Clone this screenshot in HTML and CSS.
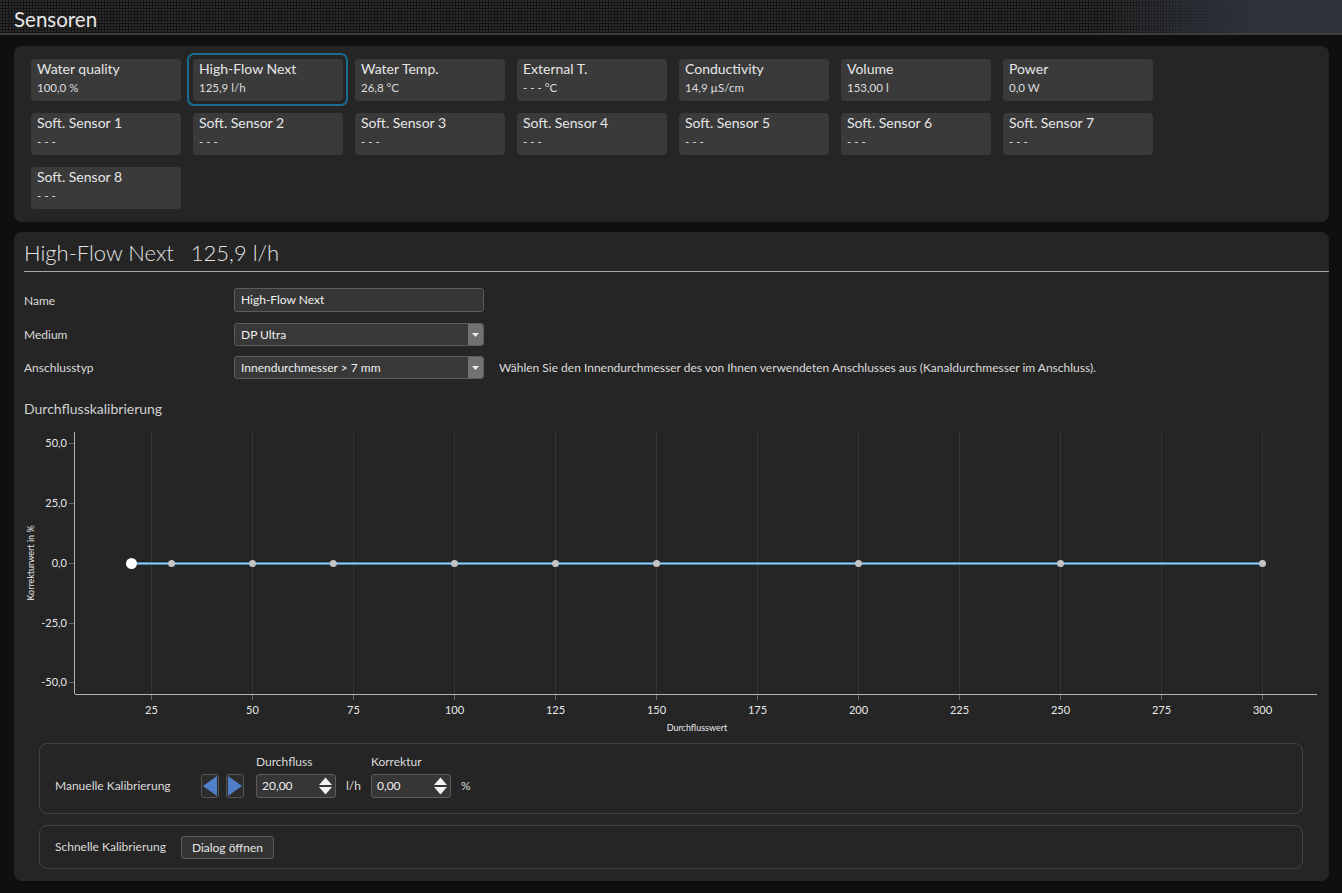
FILE: index.html
```html
<!DOCTYPE html>
<html lang="de">
<head>
<meta charset="utf-8">
<title>Sensoren</title>
<link rel="stylesheet" href="styles.css">
</head>
<body>
<header class="topbar"><h1 class="topbar-title">Sensoren</h1></header>
<main class="content">
  <section class="panel sensors">
    <div class="tile"><div class="tile-name">Water quality</div><div class="tile-value">100,0 %</div></div>
    <div class="tile selected"><div class="tile-name">High-Flow Next</div><div class="tile-value">125,9 l/h</div></div>
    <div class="tile"><div class="tile-name">Water Temp.</div><div class="tile-value">26,8 °C</div></div>
    <div class="tile"><div class="tile-name">External T.</div><div class="tile-value">- - - °C</div></div>
    <div class="tile"><div class="tile-name">Conductivity</div><div class="tile-value">14,9 µS/cm</div></div>
    <div class="tile"><div class="tile-name">Volume</div><div class="tile-value">153,00 l</div></div>
    <div class="tile"><div class="tile-name">Power</div><div class="tile-value">0,0 W</div></div>
    <div class="tile"><div class="tile-name">Soft. Sensor 1</div><div class="tile-value">- - -</div></div>
    <div class="tile"><div class="tile-name">Soft. Sensor 2</div><div class="tile-value">- - -</div></div>
    <div class="tile"><div class="tile-name">Soft. Sensor 3</div><div class="tile-value">- - -</div></div>
    <div class="tile"><div class="tile-name">Soft. Sensor 4</div><div class="tile-value">- - -</div></div>
    <div class="tile"><div class="tile-name">Soft. Sensor 5</div><div class="tile-value">- - -</div></div>
    <div class="tile"><div class="tile-name">Soft. Sensor 6</div><div class="tile-value">- - -</div></div>
    <div class="tile"><div class="tile-name">Soft. Sensor 7</div><div class="tile-value">- - -</div></div>
    <div class="tile"><div class="tile-name">Soft. Sensor 8</div><div class="tile-value">- - -</div></div>
  </section>

  <section class="panel detail">
    <h2 class="detail-title"><span>High-Flow Next</span><span>125,9 l/h</span></h2>
    <div class="form">
      <div class="form-row">
        <label class="form-label">Name</label>
        <div class="field">High-Flow Next</div>
      </div>
      <div class="form-row row-medium">
        <label class="form-label">Medium</label>
        <div class="field select">DP Ultra<span class="select-btn"><svg width="7" height="4" viewBox="0 0 7 4"><path d="M0 0H7L3.5 4Z" fill="#eee"/></svg></span></div>
      </div>
      <div class="form-row row-conn">
        <label class="form-label">Anschlusstyp</label>
        <div class="field select">Innendurchmesser &gt; 7 mm<span class="select-btn"><svg width="7" height="4" viewBox="0 0 7 4"><path d="M0 0H7L3.5 4Z" fill="#eee"/></svg></span></div>
        <span class="help">Wählen Sie den Innendurchmesser des von Ihnen verwendeten Anschlusses aus (Kanaldurchmesser im Anschluss).</span>
      </div>
    </div>

    <h3 class="section-title">Durchflusskalibrierung</h3>

    <svg class="chart" width="1305" height="315" viewBox="0 0 1305 315">
      <g stroke="#343434" stroke-width="1">
        <line x1="127.5" y1="7" x2="127.5" y2="269"/>
        <line x1="228.5" y1="7" x2="228.5" y2="269"/>
        <line x1="329.5" y1="7" x2="329.5" y2="269"/>
        <line x1="430.5" y1="7" x2="430.5" y2="269"/>
        <line x1="531.5" y1="7" x2="531.5" y2="269"/>
        <line x1="632.5" y1="7" x2="632.5" y2="269"/>
        <line x1="733.5" y1="7" x2="733.5" y2="269"/>
        <line x1="834.5" y1="7" x2="834.5" y2="269"/>
        <line x1="935.5" y1="7" x2="935.5" y2="269"/>
        <line x1="1036.5" y1="7" x2="1036.5" y2="269"/>
        <line x1="1137.5" y1="7" x2="1137.5" y2="269"/>
        <line x1="1238.5" y1="7" x2="1238.5" y2="269"/>
      </g>
      <g stroke="#6a6a6a" stroke-width="1">
        <line x1="127.5" y1="269" x2="127.5" y2="275"/>
        <line x1="228.5" y1="269" x2="228.5" y2="275"/>
        <line x1="329.5" y1="269" x2="329.5" y2="275"/>
        <line x1="430.5" y1="269" x2="430.5" y2="275"/>
        <line x1="531.5" y1="269" x2="531.5" y2="275"/>
        <line x1="632.5" y1="269" x2="632.5" y2="275"/>
        <line x1="733.5" y1="269" x2="733.5" y2="275"/>
        <line x1="834.5" y1="269" x2="834.5" y2="275"/>
        <line x1="935.5" y1="269" x2="935.5" y2="275"/>
        <line x1="1036.5" y1="269" x2="1036.5" y2="275"/>
        <line x1="1137.5" y1="269" x2="1137.5" y2="275"/>
        <line x1="1238.5" y1="269" x2="1238.5" y2="275"/>
        <line x1="45" y1="18.5" x2="50" y2="18.5"/>
        <line x1="45" y1="78.5" x2="50" y2="78.5"/>
        <line x1="45" y1="138.5" x2="50" y2="138.5"/>
        <line x1="45" y1="198.5" x2="50" y2="198.5"/>
        <line x1="45" y1="257.5" x2="50" y2="257.5"/>
      </g>
      <g stroke="#b4b4b4" stroke-width="1">
        <line x1="50.5" y1="7" x2="50.5" y2="269"/>
        <line x1="51" y1="269.5" x2="1293" y2="269.5"/>
      </g>
      <g class="axis-label" text-anchor="end">
        <text x="43" y="22">50,0</text>
        <text x="43" y="82">25,0</text>
        <text x="43" y="142">0,0</text>
        <text x="43" y="202">-25,0</text>
        <text x="43" y="261">-50,0</text>
      </g>
      <g class="axis-label" text-anchor="middle">
        <text x="127.5" y="289">25</text>
        <text x="228.5" y="289">50</text>
        <text x="329.5" y="289">75</text>
        <text x="430.5" y="289">100</text>
        <text x="531.5" y="289">125</text>
        <text x="632.5" y="289">150</text>
        <text x="733.5" y="289">175</text>
        <text x="834.5" y="289">200</text>
        <text x="935.5" y="289">225</text>
        <text x="1036.5" y="289">250</text>
        <text x="1137.5" y="289">275</text>
        <text x="1238.5" y="289">300</text>
      </g>
      <text class="axis-title" x="673" y="306" text-anchor="middle">Durchflusswert</text>
      <text class="axis-title" x="0" y="0" text-anchor="middle" transform="translate(10 138) rotate(-90)">Korrekturwert in %</text>
      <line x1="107" y1="138.5" x2="1238.5" y2="138.5" stroke="#4684ac" stroke-width="3"/>
      <line x1="107" y1="138.5" x2="1238.5" y2="138.5" stroke="#a2cde6" stroke-width="1"/>
      <g fill="#c4c4c4">
        <circle cx="147.6" cy="138.5" r="3.5"/>
        <circle cx="228.5" cy="138.5" r="3.5"/>
        <circle cx="309.3" cy="138.5" r="3.5"/>
        <circle cx="430.5" cy="138.5" r="3.5"/>
        <circle cx="531.5" cy="138.5" r="3.5"/>
        <circle cx="632.5" cy="138.5" r="3.5"/>
        <circle cx="834.5" cy="138.5" r="3.5"/>
        <circle cx="1036.5" cy="138.5" r="3.5"/>
        <circle cx="1238.5" cy="138.5" r="3.5"/>
      </g>
      <circle cx="107.5" cy="138.5" r="5.5" fill="#ffffff"/>
    </svg>

    <div class="calib-box manual">
      <span class="calib-label">Manuelle Kalibrierung</span>
      <div class="nav-buttons">
        <button class="nav-btn" type="button"><svg width="14" height="20" viewBox="0 0 14 20"><path d="M14 0V20L0 10Z" fill="#4f7fc8"/></svg></button>
        <button class="nav-btn" type="button"><svg width="14" height="20" viewBox="0 0 14 20"><path d="M0 0V20L14 10Z" fill="#4f7fc8"/></svg></button>
      </div>
      <div class="spin-group">
        <span class="spin-caption">Durchfluss</span>
        <div class="spin">20,00<svg class="spin-arrows" width="15" height="20" viewBox="0 0 15 20"><path d="M7.5 1.5L14 9H1Z" fill="#f2f2f2"/><path d="M1 11H14L7.5 18.5Z" fill="#f2f2f2"/></svg></div>
      </div>
      <span class="unit">l/h</span>
      <div class="spin-group">
        <span class="spin-caption">Korrektur</span>
        <div class="spin">0,00<svg class="spin-arrows" width="15" height="20" viewBox="0 0 15 20"><path d="M7.5 1.5L14 9H1Z" fill="#f2f2f2"/><path d="M1 11H14L7.5 18.5Z" fill="#f2f2f2"/></svg></div>
      </div>
      <span class="unit">%</span>
    </div>

    <div class="calib-box quick">
      <span class="calib-label">Schnelle Kalibrierung</span>
      <button class="btn" type="button">Dialog öffnen</button>
    </div>
  </section>
</main>
</body>
</html>
```

FILE: styles.css
```css
* { box-sizing: border-box; }

html, body {
  margin: 0;
  padding: 0;
  background: #0f0f0f;
  font-family: "Segoe UI", Lato, "Liberation Sans", sans-serif;
  color: #e0e0e0;
}

.topbar {
  height: 35px;
  border-bottom: 2px solid #3d3d3d;
  background-color: #151515;
  background-image:
    linear-gradient(to right, rgba(44,49,58,0) 0%, rgba(44,49,58,0) 82%, rgba(44,49,58,1) 93%, rgba(44,49,58,1) 100%),
    radial-gradient(circle at 1px 1px, #2a2a2a 0.9px, transparent 1.2px);
  background-size: 100% 100%, 3px 3px;
  display: flex;
  align-items: flex-end;
  padding: 0 14px 1px;
}

.topbar-title {
  margin: 0;
  font-size: 20.5px;
  font-weight: 400;
  color: #e6e6e6;
  line-height: 26px;
}

.content {
  padding: 11px 13px 0 14px;
}

.panel {
  background: #252525;
  border-radius: 8px;
}

.sensors {
  display: grid;
  grid-template-columns: repeat(7, 150px);
  grid-auto-rows: 42px;
  gap: 12px;
  padding: 13px 17px;
}

.tile {
  background: #3a3a3a;
  border-radius: 4px;
  padding: 0 6px;
  position: relative;
}

.tile.selected::after {
  content: "";
  position: absolute;
  left: -6px;
  top: -6px;
  right: -5px;
  bottom: -5px;
  border: 2px solid #1a6b91;
  border-radius: 7px;
}

.tile-name {
  font-size: 14px;
  line-height: 20px;
  color: #e6e6e6;
}

.tile-value {
  margin-top: 1px;
  font-size: 11.5px;
  line-height: 16px;
  color: #dedede;
}

.detail {
  margin-top: 10px;
  padding: 0 0 12px 10px;
}

.detail-title {
  margin: 0;
  height: 40px;
  border-bottom: 1px solid #a8a8a8;
  display: flex;
  gap: 17px;
  align-items: center;
  padding-top: 2px;
  font-size: 22px;
  font-weight: 300;
  color: #e2e2e2;
}

.form {
  padding-top: 16px;
  display: flex;
  flex-direction: column;
}

.form-row {
  display: flex;
  align-items: center;
  height: 24px;
}

.row-medium { margin-top: 11px; height: 23px; }
.row-conn { margin-top: 10px; height: 23px; }

.form-label {
  width: 210px;
  font-size: 12px;
  color: #dcdcdc;
}

.field {
  width: 250px;
  height: 100%;
  background: #363636;
  border: 1px solid #5c5c5c;
  border-radius: 3px;
  font-size: 12px;
  line-height: 21px;
  padding-left: 6px;
  color: #f0f0f0;
  position: relative;
}

.select { background: #383838; }

.select-btn {
  position: absolute;
  right: 0;
  top: 0;
  bottom: 0;
  width: 15px;
  background: #717171;
  border-radius: 0 2px 2px 0;
  display: flex;
  align-items: center;
  justify-content: center;
}

.help {
  margin-left: 15px;
  font-size: 12px;
  color: #dcdcdc;
}

.section-title {
  margin: 20px 0 0;
  font-size: 14px;
  font-weight: 400;
  color: #d0d0d0;
  line-height: 20px;
}

.chart {
  display: block;
  margin-top: 6px;
}

.axis-label {
  font-size: 11px;
  fill: #e8e8e8;
  font-family: "Segoe UI", Lato, sans-serif;
}

.axis-title {
  font-size: 9px;
  fill: #e8e8e8;
  font-family: "Segoe UI", Lato, sans-serif;
}

.calib-box {
  margin: 3px 26px 0 15px;
  border: 1px solid #434343;
  border-radius: 8px;
  display: flex;
  padding: 0 15px;
}

.manual {
  height: 71px;
  align-items: flex-end;
  padding-bottom: 15px;
}

.quick {
  margin-top: 11px;
  height: 44px;
  align-items: center;
  gap: 15px;
}

.calib-label {
  font-size: 12px;
  color: #dcdcdc;
  line-height: 24px;
}

.manual .calib-label { width: 146px; }

.nav-buttons {
  display: flex;
  gap: 7px;
  margin-right: 12px;
}

.nav-btn {
  width: 18px;
  height: 24px;
  padding: 0;
  margin: 0;
  background: #2c2c2c;
  border: 1px solid #565656;
  border-radius: 3px;
  display: flex;
  align-items: center;
  justify-content: center;
}

.spin-group {
  display: flex;
  flex-direction: column;
  gap: 5px;
}

.spin-caption {
  font-size: 12px;
  color: #dcdcdc;
  line-height: 14px;
}

.spin {
  width: 80px;
  height: 24px;
  background: #363636;
  border: 1px solid #5c5c5c;
  border-radius: 3px;
  font-size: 12px;
  line-height: 22px;
  padding-left: 5px;
  color: #f0f0f0;
  position: relative;
}

.spin-arrows {
  position: absolute;
  right: 2px;
  top: 1px;
}

.unit {
  font-size: 12px;
  color: #dcdcdc;
  line-height: 24px;
  margin: 0 10px;
}

.btn {
  height: 23px;
  padding: 0 10px;
  background: #333333;
  border: 1px solid #5a5a5a;
  border-radius: 3px;
  font-family: inherit;
  font-size: 12px;
  color: #e6e6e6;
}
```
